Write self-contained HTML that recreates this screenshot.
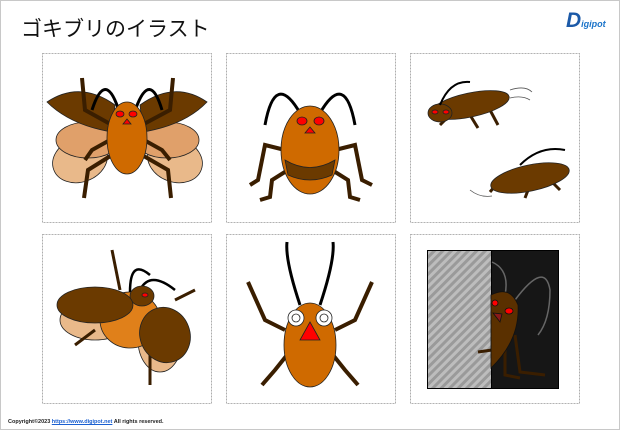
<!DOCTYPE html>
<html><head><meta charset="utf-8"><style>
html,body{margin:0;padding:0;background:#fff}
body{width:620px;height:430px;position:relative;overflow:hidden;font-family:"Liberation Sans","Noto Sans CJK JP",sans-serif}
.frame{position:absolute;left:0;top:0;width:618px;height:428px;border:1px solid #c8c8c8}
.title{position:absolute;left:21px;top:13px;font-size:21px;color:#111}
.foot{position:absolute;left:8px;top:419px;font-size:5.5px;font-weight:bold;color:#222}
.foot span{color:#1a5fd0;text-decoration:underline}
.logo{position:absolute;left:566px;top:9px;font-weight:bold;color:#1a73c9;font-size:9px;font-style:italic}
.logo b{font-size:21px;color:#1c5aa8}
</style></head><body>
<div class="frame"></div>
<div class="title">ゴキブリのイラスト</div>
<div class="logo"><b>D</b>igipot</div>
<svg width="620" height="430" style="position:absolute;left:0;top:0" xmlns="http://www.w3.org/2000/svg">
<defs>
<pattern id="h" width="6" height="6" patternUnits="userSpaceOnUse" patternTransform="rotate(45)">
<rect width="6" height="6" fill="#9a9a9a"/><rect width="3" height="6" fill="#bdbdbd"/></pattern>
</defs>
<g fill="none" stroke="#999" stroke-dasharray="2,1" stroke-width="0.8">
<rect x="42.5" y="53.5" width="169" height="169"/><rect x="226.5" y="53.5" width="169" height="169"/><rect x="410.5" y="53.5" width="169" height="169"/>
<rect x="42.5" y="234.5" width="169" height="169"/><rect x="226.5" y="234.5" width="169" height="169"/><rect x="410.5" y="234.5" width="169" height="169"/>
</g>
<!-- cell1 -->
<g stroke="#222" stroke-width="0.8">
<ellipse cx="80" cy="160" rx="28" ry="22" fill="#e9b98a" transform="rotate(-20 80 160)"/>
<ellipse cx="175" cy="160" rx="28" ry="22" fill="#e9b98a" transform="rotate(20 175 160)"/>
<ellipse cx="88" cy="140" rx="32" ry="18" fill="#e0a06a"/>
<ellipse cx="167" cy="140" rx="32" ry="18" fill="#e0a06a"/>
<path d="M47 102 Q80 80 115 105 L112 132 Q70 125 47 102Z" fill="#6b3a00"/>
<path d="M207 102 Q175 80 140 105 L143 132 Q185 125 207 102Z" fill="#6b3a00"/>
<g stroke="#3a1e00" stroke-width="4" fill="none"><path d="M112 125 L85 110 L82 78"/><path d="M142 125 L170 110 L173 78"/><path d="M112 155 L88 170 L84 198"/><path d="M142 155 L168 170 L171 198"/><path d="M110 140 L92 150 L85 160"/><path d="M144 140 L162 150 L170 160"/></g>
<path d="M118 108 Q105 70 92 110" stroke="#000" stroke-width="3" fill="none"/>
<path d="M136 108 Q150 70 162 110" stroke="#000" stroke-width="3" fill="none"/>
<ellipse cx="127" cy="138" rx="20" ry="36" fill="#cf6a00"/>
<ellipse cx="120" cy="114" rx="4" ry="3" fill="red"/><ellipse cx="133" cy="114" rx="4" ry="3" fill="red"/>
<path d="M127 119 L123 124 L131 124Z" fill="red"/>
</g>
<!-- cell2 -->
<g stroke="#222" stroke-width="0.8">
<path d="M300 113 Q275 70 265 125" stroke="#000" stroke-width="3" fill="none"/>
<path d="M320 113 Q345 70 355 125" stroke="#000" stroke-width="3" fill="none"/>
<g stroke="#3a1e00" stroke-width="4" fill="none"><path d="M285 150 L265 145 L258 180 L250 185"/><path d="M335 150 L355 145 L362 180 L372 185"/><path d="M288 170 L272 180 L270 197 L260 200"/><path d="M332 170 L348 180 L350 197 L360 200"/></g>
<ellipse cx="310" cy="150" rx="29" ry="44" fill="#cf6a00"/>
<path d="M285 160 Q310 175 335 160 L332 175 Q310 185 288 175Z" fill="#6b3a00"/>
<ellipse cx="302" cy="121" rx="5" ry="4" fill="red"/><ellipse cx="319" cy="121" rx="5" ry="4" fill="red"/>
<path d="M310 127 L305 133 L315 133Z" fill="red"/>
</g>
<!-- cell3 -->
<g stroke="#222" stroke-width="0.8">
<g stroke="#3a1e00" stroke-width="3" fill="none"><path d="M450 115 L440 125"/><path d="M470 115 L478 128"/><path d="M490 110 L498 125"/><path d="M500 180 L490 192"/><path d="M530 185 L525 198"/><path d="M550 180 L560 190"/></g>
<ellipse cx="470" cy="105" rx="40" ry="12" fill="#6b3a00" transform="rotate(-12 470 105)"/>
<ellipse cx="440" cy="113" rx="12" ry="9" fill="#6b3a00"/>
<path d="M440 105 Q450 80 470 82" stroke="#000" stroke-width="2" fill="none"/>
<ellipse cx="435" cy="112" rx="3" ry="2" fill="red"/><ellipse cx="446" cy="112" rx="3" ry="2" fill="red"/>
<ellipse cx="530" cy="178" rx="40" ry="13" fill="#6b3a00" transform="rotate(-12 530 178)"/>
<path d="M520 165 Q540 145 565 150" stroke="#000" stroke-width="2" fill="none"/>
<path d="M510 90 Q525 85 532 92 M510 98 Q522 95 530 100 M470 190 Q480 198 492 196" stroke="#555" fill="none"/>
</g>
<!-- cell4 -->
<g stroke="#222" stroke-width="0.8">
<ellipse cx="95" cy="320" rx="35" ry="20" fill="#e9b98a"/>
<ellipse cx="160" cy="340" rx="22" ry="32" fill="#e9b98a"/>
<ellipse cx="130" cy="320" rx="30" ry="28" fill="#e0801a"/>
<g stroke="#3a1e00" stroke-width="3" fill="none"><path d="M120 290 L112 250"/><path d="M175 300 L195 290"/><path d="M150 355 L150 385"/><path d="M95 330 L75 345"/></g>
<path d="M140 290 Q150 270 175 290" stroke="#000" stroke-width="2.5" fill="none"/>
<path d="M130 292 Q130 258 150 275" stroke="#000" stroke-width="2.5" fill="none"/>
<ellipse cx="142" cy="296" rx="12" ry="10" fill="#6b3a00"/>
<ellipse cx="145" cy="295" rx="3" ry="2" fill="red"/>
<ellipse cx="95" cy="305" rx="38" ry="18" fill="#6b3a00"/>
<ellipse cx="165" cy="335" rx="25" ry="28" fill="#6b3a00" transform="rotate(-20 165 335)"/>
</g>
<!-- cell5 -->
<g stroke="#222" stroke-width="0.8">
<path d="M300 305 Q285 260 287 242" stroke="#000" stroke-width="3" fill="none"/>
<path d="M320 305 Q335 260 333 242" stroke="#000" stroke-width="3" fill="none"/>
<g stroke="#3a1e00" stroke-width="4" fill="none"><path d="M285 330 L265 320 L248 282"/><path d="M335 330 L355 320 L372 282"/><path d="M287 355 L275 370 L262 385"/><path d="M333 355 L345 370 L358 385"/></g>
<ellipse cx="310" cy="345" rx="26" ry="42" fill="#cf6a00"/>
<circle cx="296" cy="318" r="8" fill="#fff"/><circle cx="324" cy="318" r="8" fill="#fff"/>
<circle cx="296" cy="318" r="4" fill="#fff"/><circle cx="324" cy="318" r="4" fill="#fff"/>
<path d="M310 322 L300 340 L320 340Z" fill="red"/>
</g>
<!-- cell6 -->
<rect x="427.5" y="250.5" width="64" height="138" fill="url(#h)" stroke="#000"/>
<rect x="491.5" y="250.5" width="67" height="138" fill="#161616" stroke="#000"/>
<g stroke="#666" stroke-width="1.5" fill="none"><path d="M492 262 Q510 270 505 295"/><path d="M515 300 Q545 260 550 290 Q550 320 538 335"/></g>
<g stroke="#111" stroke-width="0.8">
<g stroke="#3a1e00" stroke-width="3" fill="none"><path d="M492 350 L478 352"/><path d="M515 335 L520 372 L545 375"/><path d="M505 345 L505 375 L520 378"/></g>
<path d="M491 295 Q510 285 518 305 Q520 340 491 368Z" fill="#5a3000"/>
<ellipse cx="495" cy="303" rx="3" ry="3" fill="red"/><ellipse cx="509" cy="311" rx="4" ry="3" fill="red"/>
<path d="M493 313 L500 322 L502 314Z" fill="#8a1a1a"/>
</g>
</svg>
<div class="foot">Copyright©2023 <span>https://www.digipot.net</span> All rights reserved.</div>
</body></html>
